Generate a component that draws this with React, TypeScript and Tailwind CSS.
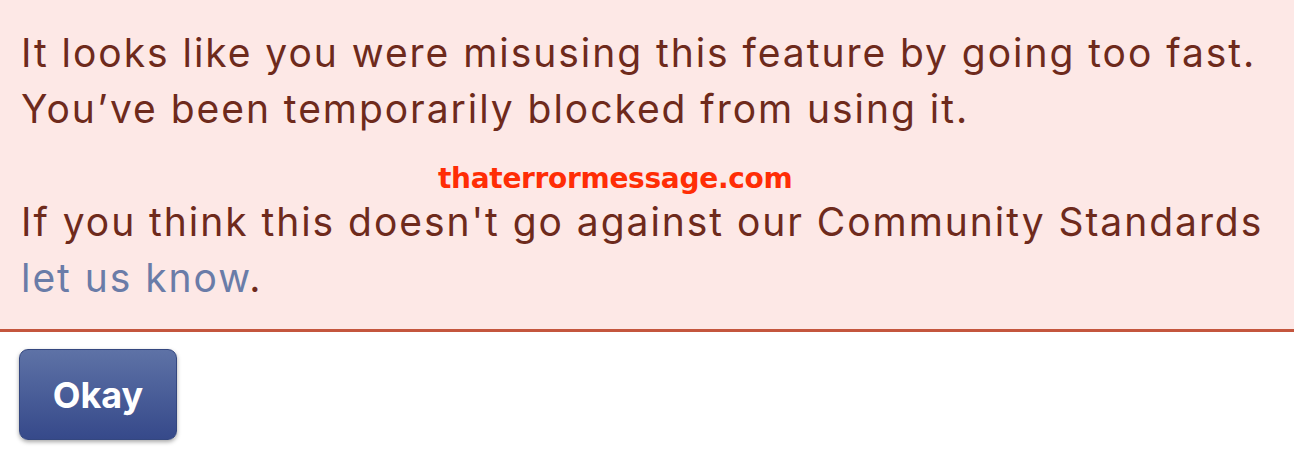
export default function App() {
  return (
    <div className="h-[451px] w-[1294px] overflow-hidden bg-white font-['Inter',sans-serif]">
      <div className="h-[332px] border-b-[3px] border-[#c4563e] bg-[#fde8e6] pl-[21px] pt-[25px] text-[39px] leading-[56px] tracking-[1.95px] text-[#6e2a1c]">
        <p>It looks like you were misusing this feature by going too fast.</p>
        <p>You’ve been temporarily blocked from using it.</p>
        <p className="pt-[27px] pl-[417px] font-['DejaVu_Sans',sans-serif] text-[28px] leading-[30px] font-bold tracking-[-0.3px] text-[#ff2d05]">
          thaterrormessage.com
        </p>
        <p>
          If you think this doesn't go against our Community Standards
        </p>
        <p>
          <span className="text-[#6a7ca8]">let us know</span>.
        </p>
      </div>
      <div className="pl-[19px] pt-[17px]">
        <button className="flex h-[91px] w-[158px] items-center justify-center rounded-[9px] border border-[#34477f] bg-gradient-to-b from-[#5e72a6] to-[#36498a] text-[36px] font-bold text-white shadow-[0_2px_4px_rgba(0,0,0,0.35)]">
          Okay
        </button>
      </div>
    </div>
  );
}
